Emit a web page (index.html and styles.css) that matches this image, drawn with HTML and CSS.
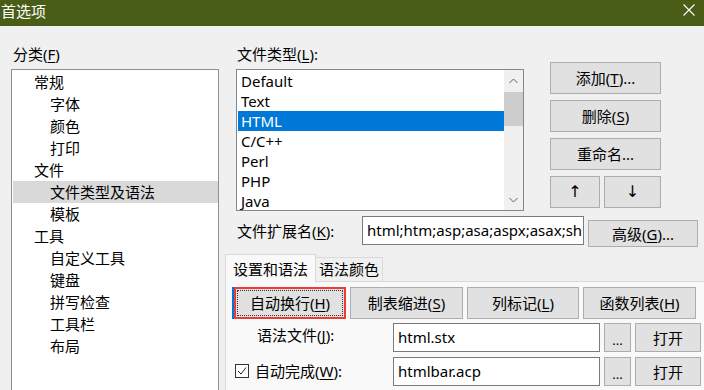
FILE: index.html
```html
<!DOCTYPE html>
<html lang="zh">
<head>
  <meta charset="UTF-8">
  <title>首选项</title>
  <link rel="stylesheet" href="styles.css">
</head>
<body>
  <div class="titlebar">
    <span class="title">首选项</span>
    <svg class="close" viewBox="0 0 12 12"><path d="M0.5 0.5 L11.5 11.5 M11.5 0.5 L0.5 11.5" stroke="#fff" stroke-width="1.1" fill="none"/></svg>
  </div>

  <div class="dialog">
    <!-- colonne de gauche : catégories -->
    <div class="left">
      <div class="label cat-label">分类(<u>F</u>)</div>
      <ul class="tree">
        <li class="l1">常规</li>
        <li class="l2">字体</li>
        <li class="l2">颜色</li>
        <li class="l2">打印</li>
        <li class="l1">文件</li>
        <li class="l2 sel">文件类型及语法</li>
        <li class="l2">模板</li>
        <li class="l1">工具</li>
        <li class="l2">自定义工具</li>
        <li class="l2">键盘</li>
        <li class="l2">拼写检查</li>
        <li class="l2">工具栏</li>
        <li class="l2">布局</li>
      </ul>
    </div>

    <div class="right">
      <div class="types">
        <div class="types-col">
          <div class="label">文件类型(<u>L</u>):</div>
          <div class="listbox">
            <ul class="items">
              <li>Default</li>
              <li>Text</li>
              <li class="sel">HTML</li>
              <li>C/C++</li>
              <li>Perl</li>
              <li>PHP</li>
              <li>Java</li>
            </ul>
            <div class="scrollbar">
              <div class="sb-btn"><svg width="9" height="6" viewBox="0 0 9 6"><polyline points="0.5,5 4.5,1 8.5,5" stroke="#606060" fill="none"/></svg></div>
              <div class="thumb"></div>
              <div class="sb-space"></div>
              <div class="sb-btn"><svg width="9" height="6" viewBox="0 0 9 6"><polyline points="0.5,1 4.5,5 8.5,1" stroke="#606060" fill="none"/></svg></div>
            </div>
          </div>
        </div>
        <div class="side">
          <button>添加(<u>T</u>)...</button>
          <button>删除(<u>S</u>)</button>
          <button>重命名...</button>
          <div class="arrows">
            <button class="up">↑</button>
            <button class="down">↓</button>
          </div>
        </div>
      </div>

      <div class="ext-row">
        <div class="ext-label">文件扩展名(<u>K</u>):</div>
        <div class="field ext-field">html;htm;asp;asa;aspx;asax;sh</div>
        <button class="adv">高级(<u>G</u>)...</button>
      </div>

      <div class="tabs">
        <div class="tab active">设置和语法</div>
        <div class="tab second">语法颜色</div>
      </div>
      <div class="panel">
        <div class="btn-row">
          <button class="focus"><span>自动换行(<u>H</u>)</span></button>
          <button>制表缩进(<u>S</u>)</button>
          <button>列标记(<u>L</u>)</button>
          <button>函数列表(<u>H</u>)</button>
        </div>
        <div class="file-row">
          <div class="row-label syntax">语法文件(<u>J</u>):</div>
          <div class="field file-field">html.stx</div>
          <button class="dots">...</button>
          <button class="open">打开</button>
        </div>
        <div class="file-row second-row">
          <div class="row-label check">
            <svg class="checkbox" width="14" height="14" viewBox="0 0 14 14"><rect x="0.5" y="0.5" width="13" height="13" fill="#fff" stroke="#333"/><polyline points="3,7 6,10 11,3.5" stroke="#222" fill="none"/></svg>
            <span>自动完成(<u>W</u>):</span>
          </div>
          <div class="field file-field">htmlbar.acp</div>
          <button class="dots">...</button>
          <button class="open">打开</button>
        </div>
      </div>
    </div>
  </div>
</body>
</html>
```

FILE: styles.css
```css
body {
  margin: 0;
  width: 704px;
  height: 390px;
  overflow: hidden;
  background: #f0f0f0;
  font-family: "Noto Sans", "Noto Sans CJK SC", sans-serif;
  font-size: 15px;
  color: #000;
}
ul {
  list-style: none;
  margin: 0;
}
button {
  font-family: inherit;
  font-size: 15px;
  color: #000;
  background: #e1e1e1;
  border: 1px solid #adadad;
  padding: 0;
  margin: 0;
  box-sizing: border-box;
  line-height: 20px;
}
u {
  text-decoration-thickness: 1px;
  text-underline-offset: 2px;
}
.titlebar {
  height: 26px;
  background: #4a5d17;
  color: #fff;
  display: flex;
  align-items: center;
  justify-content: space-between;
}
.title {
  padding-left: 1px;
  line-height: 20px;
  margin-top: -4px;
}
.close {
  width: 12px;
  height: 12px;
  margin-right: 9px;
  margin-top: -6px;
}
.dialog {
  display: flex;
  padding: 18px 0 0 11px;
}
.left {
  width: 208px;
}
.label {
  height: 20px;
  line-height: 20px;
  margin-bottom: 5px;
}
.cat-label {
  padding-left: 2px;
}
.tree {
  background: #fff;
  border: 1px solid #8f8f8f;
  border-bottom: none;
  padding: 1px 0 0 1px;
  height: 319px;
  overflow: hidden;
}
.tree li {
  height: 22px;
  line-height: 22px;
  white-space: nowrap;
}
.tree .l1 {
  padding-left: 21px;
}
.tree .l2 {
  padding-left: 37px;
}
.tree .sel {
  background: #d9d9d9;
}
.right {
  width: 479px;
  margin-left: 6px;
}
.types {
  display: flex;
}
.types-col {
  width: 288px;
  margin-left: 11px;
}
.types-col .label {
  padding-left: 1px;
}
.listbox {
  height: 142px;
  box-sizing: border-box;
  border: 1px solid #828790;
  background: #fff;
  display: flex;
  padding: 1px 0 0 1px;
  overflow: hidden;
}
.items {
  width: 266px;
  padding: 0;
}
.items li {
  height: 20px;
  line-height: 20px;
  padding-left: 3px;
}
.items .sel {
  background: #0078d7;
  color: #fff;
}
.scrollbar {
  width: 19px;
  height: 140px;
  margin-top: -1px;
  background: #f0f0f0;
  display: flex;
  flex-direction: column;
}
.sb-btn {
  height: 21px;
  display: flex;
  align-items: center;
  justify-content: center;
}
.thumb {
  height: 34px;
  margin-top: 1px;
  background: #cdcdcd;
}
.sb-space {
  flex: 1;
}
.side {
  width: 111px;
  margin-left: 26px;
  margin-top: 18px;
  display: flex;
  flex-direction: column;
  gap: 6px;
}
.side button {
  height: 32px;
}
.arrows {
  display: flex;
  gap: 4px;
}
.arrows .up {
  width: 50px;
}
.arrows .down {
  width: 57px;
}
.arrows button {
  font-family: "DejaVu Sans", sans-serif;
  font-size: 16px;
}
.ext-row {
  display: flex;
  align-items: flex-start;
  margin-top: 5px;
  padding-left: 12px;
}
.ext-label {
  width: 125px;
  line-height: 29px;
  padding-top: 1px;
}
.field {
  height: 29px;
  box-sizing: border-box;
  border: 1px solid #7a7a7a;
  background: #fff;
  line-height: 27px;
  padding-left: 4px;
  white-space: nowrap;
  overflow: hidden;
}
.ext-field {
  width: 222px;
  padding-left: 4px;
}
.adv {
  width: 110px;
  height: 27px;
  margin-left: 4px;
  margin-top: 4px;
}
.tabs {
  display: flex;
  align-items: flex-end;
  height: 27px;
  margin-top: 7px;
  position: relative;
  z-index: 1;
}
.tab {
  box-sizing: border-box;
  height: 24px;
  line-height: 23px;
  border: 1px solid #d9d9d9;
  border-bottom: none;
  background: #f0f0f0;
  text-align: center;
}
.tab.active {
  width: 91px;
  height: 28px;
  line-height: 28px;
  margin-bottom: -1px;
  background: #f9f9f9;
}
.tab.second {
  width: 67px;
  border-left: none;
}
.panel {
  width: 490px;
  height: 103px;
  border: 1px solid #d9d9d9;
  border-bottom: none;
  background: #f9f9f9;
  padding: 5px 0 0 8px;
  overflow: hidden;
}
.btn-row {
  display: grid;
  grid-template-columns: 112px 113px 112px 113px;
  column-gap: 4px;
  height: 32px;
}
.btn-row .focus {
  border: 2px solid #ee3b36;
  box-shadow: -2px 0 0 #0078d7;
  padding: 1px;
}
.focus span {
  display: block;
  height: 100%;
  box-sizing: border-box;
  border: 1px dotted #333;
  line-height: 24px;
}
.file-row {
  display: flex;
  align-items: center;
  height: 29px;
  margin-top: 4px;
}
.second-row {
  margin-top: 5px;
}
.row-label {
  width: 159px;
  box-sizing: border-box;
}
.syntax {
  padding-left: 23px;
  padding-bottom: 6px;
}
.check {
  display: flex;
  align-items: center;
  padding-left: 1px;
  padding-bottom: 2px;
}
.checkbox {
  margin-right: 6px;
}
.file-field {
  width: 207px;
}
.dots {
  width: 27px;
  height: 29px;
  margin-left: 4px;
  font-size: 13px;
  padding-top: 5px;
}
.open {
  width: 66px;
  height: 29px;
  margin-left: 4px;
}
```
